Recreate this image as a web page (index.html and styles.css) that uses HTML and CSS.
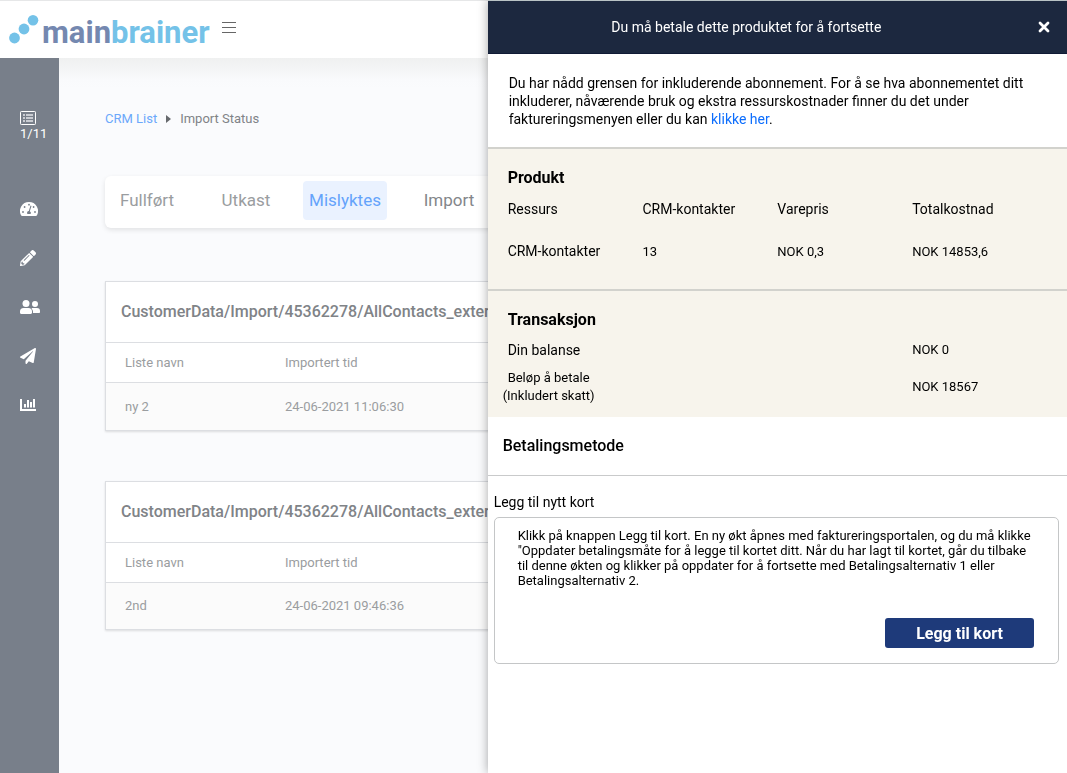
FILE: index.html
```html
<!DOCTYPE html>
<html lang="no">
<head>
<meta charset="utf-8">
<meta name="viewport" content="width=device-width, initial-scale=1">
<title>Mainbrainer – Import Status</title>
<link rel="stylesheet" href="styles.css">
</head>
<body>
<div class="app">
  <header class="topbar">
    <a class="logo" href="#">
      <svg class="logo-mark" viewBox="0 0 30 30" width="30" height="30" aria-hidden="true"><circle cx="5.500" cy="23" r="5.400"/><circle cx="15" cy="14" r="5.400"/><circle cx="24" cy="5.300" r="5.300"/></svg>
      <span class="logo-text"><span class="logo-main">main</span>brainer</span>
    </a>
    <button class="menu-btn" type="button" aria-label="Menu">
      <svg viewBox="0 0 14 12" width="14" height="12" aria-hidden="true"><path d="M0 .5h14M0 5.500h14M0 10.500h14" stroke="#666" fill="none"/></svg>
    </button>
  </header>
  <nav class="sidebar" aria-label="Main">
    <a class="side-link side-steps" href="#">
      <svg viewBox="0 0 16 14" width="16" height="14" aria-hidden="true"><rect x=".5" y=".5" width="15" height="13" rx=".8" fill="none" stroke="#fff"/><path d="M3 4h2M6 4h7M3 7h2M6 7h7M3 10h2M6 10h7" stroke="#e4e6ea" stroke-width="1.600" fill="none"/></svg>
      <span>1/11</span>
    </a>
    <a class="side-link" href="#" aria-label="Dashboard">
      <svg viewBox="0 0 18 14" width="18" height="14"><path fill="#fff" d="M9 0a9 9 0 0 0-7.800 13.500c.2.300.5.500.8.500h14c.3 0 .6-.2.800-.5A9 9 0 0 0 9 0z"/><g fill="#787f8a"><circle cx="9" cy="2.700" r=".9"/><circle cx="4.600" cy="5" r=".9"/><circle cx="13.600" cy="5" r=".9"/><circle cx="3" cy="10" r=".9"/><circle cx="15" cy="10" r=".9"/><path d="M10.500 3.600l1 .3-1.700 5.300a2 2 0 0 1 .8 2.800H7.400a2 2 0 0 1 1.400-3.100z"/></g></svg>
    </a>
    <a class="side-link" href="#" aria-label="Edit">
      <svg viewBox="0 0 512 512" width="16" height="16"><path fill="#fff" d="M498 142l-46 46c-5 5-13 5-17 0L324 77c-5-5-5-12 0-17l46-46c19-19 49-19 68 0l60 60c19 19 19 49 0 68zm-214-42L22 362 0 484c-3 16 12 30 28 28l122-22 262-262c5-5 5-13 0-17L301 100c-4-5-12-5-17 0zM124 340c-5-6-5-14 0-20l154-154c6-5 14-5 20 0s5 14 0 20L144 340c-6 5-14 5-20 0zm-36 84h48v36l-64 12-32-31 12-65h36v48z"/></svg>
    </a>
    <a class="side-link" href="#" aria-label="Contacts">
      <svg viewBox="0 0 20 14" width="20" height="14"><g fill="#fff"><circle cx="6" cy="3.500" r="3.500"/><circle cx="15" cy="4" r="3"/><path d="M3.600 8h4.800A3.600 3.600 0 0 1 12 11.600v1.200c0 .7-.5 1.200-1.200 1.200H1.200C.5 14 0 13.500 0 12.800v-1.200A3.600 3.600 0 0 1 3.600 8z"/><path d="M13 8h4a3 3 0 0 1 3 3v1c0 .6-.4 1-1 1h-6v-1.500A4.600 4.600 0 0 0 11.500 8.400c.4-.3 1-.4 1.500-.4z"/></g></svg>
    </a>
    <a class="side-link" href="#" aria-label="Send">
      <svg viewBox="0 0 512 512" width="16" height="16"><path fill="#fff" d="M476 3.200L12.500 270.600c-18.100 10.400-15.800 35.600 2.200 43.200L121 358.400l287.300-253.200c5.500-4.900 13.300 2.600 8.600 8.300L176 407v80.500c0 23.600 28.500 32.900 42.500 15.800L282 426l124.600 52.200c14.200 6 30.400-2.900 33-18.200l72-432C515 7.800 493.300-6.800 476 3.200z"/></svg>
    </a>
    <a class="side-link" href="#" aria-label="Reports">
      <svg viewBox="0 0 16 12" width="16" height="12"><path fill="#fff" d="M0 0h2v10h14v2H0zM4 5h2v3.500H4zM7 1h2v7.500H7zM10 3h2v5.500h-2zM13 0h2v8.500h-2z"/></svg>
    </a>
  </nav>
  <main class="content">
    <nav class="crumbs" aria-label="Breadcrumb">
      <a href="#">CRM List</a>
      <svg viewBox="0 0 5 8" width="5" height="8" aria-hidden="true"><path d="M0 0l5 4-5 4z" fill="#66696d"/></svg>
      <span>Import Status</span>
    </nav>
    <div class="tabs">
      <button class="tab" type="button">Fullført</button>
      <button class="tab" type="button">Utkast</button>
      <button class="tab tab-active" type="button">Mislyktes</button>
      <button class="tab tab-dark" type="button">Import</button>
    </div>
    <section class="card">
      <h2 class="card-title">CustomerData/Import/45362278/AllContacts_extern</h2>
      <table class="list">
        <thead><tr><th>Liste navn</th><th>Importert tid</th></tr></thead>
        <tbody><tr><td>ny 2</td><td>24-06-2021 11:06:30</td></tr></tbody>
      </table>
    </section>
    <section class="card">
      <h2 class="card-title">CustomerData/Import/45362278/AllContacts_extern</h2>
      <table class="list">
        <thead><tr><th>Liste navn</th><th>Importert tid</th></tr></thead>
        <tbody><tr><td>2nd</td><td>24-06-2021 09:46:36</td></tr></tbody>
      </table>
    </section>
  </main>
</div>

<aside class="drawer" role="dialog" aria-labelledby="drawer-title">
  <header class="drawer-head">
    <h1 class="drawer-title" id="drawer-title">Du må betale dette produktet for å fortsette</h1>
    <button class="close-btn" type="button" aria-label="Lukk">
      <svg viewBox="0 0 12 12" width="12" height="12" aria-hidden="true"><path d="M2 2l8 8M10 2l-8 8" stroke="#fff" stroke-width="2.800" stroke-linecap="round"/></svg>
    </button>
  </header>
  <p class="notice">Du har nådd grensen for inkluderende abonnement. For å se hva abonnementet ditt inkluderer, nåværende bruk og ekstra ressurskostnader finner du det under faktureringsmenyen eller du kan <a href="#">klikke her</a>.</p>
  <section class="panel panel-product">
    <h2 class="panel-title">Produkt</h2>
    <table class="costs">
      <thead><tr><th>Ressurs</th><th>CRM-kontakter</th><th>Varepris</th><th>Totalkostnad</th></tr></thead>
      <tbody><tr><td class="name">CRM-kontakter</td><td>13</td><td>NOK 0,3</td><td>NOK 14853,6</td></tr></tbody>
    </table>
  </section>
  <section class="panel panel-transaction">
    <h2 class="panel-title">Transaksjon</h2>
    <dl class="totals">
      <dt>Din balanse</dt><dd>NOK 0</dd>
      <dt class="due">Beløp å betale<br>(Inkludert skatt)</dt><dd>NOK 18567</dd>
    </dl>
  </section>
  <h2 class="method-title">Betalingsmetode</h2>
  <section class="new-card">
    <h3 class="new-card-title">Legg til nytt kort</h3>
    <div class="new-card-box">
      <p>Klikk på knappen Legg til kort. En ny økt åpnes med faktureringsportalen, og du må klikke "Oppdater betalingsmåte for å legge til kortet ditt. Når du har lagt til kortet, går du tilbake til denne økten og klikker på oppdater for å fortsette med Betalingsalternativ 1 eller Betalingsalternativ 2.</p>
      <button class="add-btn" type="button">Legg til kort</button>
    </div>
  </section>
</aside>
</body>
</html>
```
FILE: styles.css
```css
* { box-sizing: border-box; }

body {
  margin: 0;
  font-family: Roboto, "Liberation Sans", sans-serif;
  font-size: 14px;
  color: #000;
  background: #fafbfd;
  overflow: hidden;
}

h1, h2, h3, p, dl, dd { margin: 0; }
a { text-decoration: none; }
button { font: inherit; border: 0; padding: 0; background: none; cursor: pointer; }
svg { display: block; }

.app {
  display: grid;
  grid-template: 58px 1fr / 59px minmax(0, 1fr);
  min-height: 100vh;
}

.topbar {
  grid-column: 1 / -1;
  display: flex;
  gap: 12px;
  padding-left: 9px;
  background: #fff;
  border-top: 1px solid #e6e7e8;
}

.logo { display: flex; gap: 3px; }
.logo-mark { margin-top: 14px; fill: #74c2e8; }
.logo-text {
  padding-top: 14px;
  font-size: 31px;
  line-height: 36px;
  font-weight: 700;
  color: #74c2e8;
}
.logo-main { color: #7488b0; }
.menu-btn { align-self: flex-start; margin-top: 21px; }

.sidebar {
  display: flex;
  flex-direction: column;
  padding: 53px 0 0 20px;
  background: #787f8a;
}
.side-link {
  display: flex;
  align-items: center;
  height: 49px;
  color: #fff;
}
.side-steps {
  flex-direction: column;
  align-items: flex-start;
  gap: 1px;
  height: 73px;
  font-size: 13px;
  line-height: 16px;
}

.content {
  padding: 52px 0 0 46px;
  background: linear-gradient(#eff0f0, #f9fafc 22px, #fafbfd 30px);
}

.crumbs {
  display: flex;
  align-items: center;
  gap: 9px;
  font-size: 13px;
  line-height: 18px;
  color: #808387;
}
.crumbs a { color: #6ba8fb; }

.tabs {
  display: grid;
  grid-template-columns: 84px 114px 84px 124px;
  height: 52px;
  margin-top: 48px;
  padding: 5px 0 8px;
  background: #fff;
  border-radius: 6px;
  box-shadow: 0 2px 5px rgba(0, 0, 0, .1);
}
.tab {
  border-radius: 4px;
  font-size: 17px;
  line-height: 39px;
  color: #9a9da0;
}
.tab-active { color: #64a3fb; background: #eaf2ff; }
.tab-dark { color: #83868a; }

.card {
  margin-top: 50px;
  background: #fff;
  border: 1px solid #dcdee2;
  box-shadow: 0 1px 2px rgba(0, 0, 0, .12);
}
.tabs + .card { margin-top: 53px; }
.card-title {
  padding-left: 15px;
  font-size: 16px;
  line-height: 60px;
  font-weight: 500;
  color: #808387;
  white-space: nowrap;
}
.list {
  width: 100%;
  table-layout: fixed;
  border-collapse: collapse;
  font-size: 13px;
  text-align: left;
  color: #9a9da0;
}
.list th, .list td { padding: 0 0 0 19px; border-top: 1px solid #dcdee2; font-weight: 400; }
.list th:first-child { width: 160px; }
.list th { height: 40px; }
.list td { height: 47px; background: #fbfbfb; }

.drawer {
  position: fixed;
  top: 0;
  right: 0;
  bottom: 0;
  width: 54.3%;
  overflow-y: auto;
  background: #fff;
  border-top: 1px solid #b9c3c5;
  box-shadow: 0 0 10px rgba(0, 0, 0, .35);
}
.drawer-head {
  display: flex;
  align-items: center;
  padding-right: 17px;
  background: #1c283f;
  border-bottom: 1px solid #101a35;
}
.drawer-title {
  flex: 1;
  font-size: 14px;
  line-height: 52px;
  font-weight: 400;
  text-align: center;
  color: #fff;
}
.close-btn {
  display: flex;
  justify-content: flex-end;
  width: 45px;
}
.notice {
  padding: 20px 35px 19px 21px;
  line-height: 18px;
}
.notice a { color: #0d6efd; }

.panel {
  padding: 0 20px;
  background: #f7f4ec;
  border-top: 2px solid #d2d2cd;
}
.panel-title {
  padding-top: 18px;
  font-size: 16px;
  line-height: 21px;
  font-weight: 700;
}
.panel-product { padding-bottom: 17px; }
.panel-transaction { padding-bottom: 12px; }

.costs {
  width: 100%;
  table-layout: fixed;
  border-collapse: collapse;
  text-align: left;
}
.costs th, .costs td { height: 42px; padding: 0; font-weight: 400; }
.costs th:nth-child(-n+3) { width: 25%; }
.costs td { font-size: 13px; }
.costs .name { font-size: 14px; }

.totals {
  display: grid;
  grid-template-columns: 3fr 1fr;
  align-items: center;
  gap: 10px 0;
  padding-top: 11px;
  line-height: 18px;
}
.totals dd { font-size: 13px; }
.totals .due {
  justify-self: start;
  margin-left: -5px;
  font-size: 13px;
  text-align: center;
}

.method-title {
  padding-left: 15px;
  font-size: 16px;
  line-height: 58px;
  font-weight: 500;
  border-bottom: 1px solid #c9cacb;
}
.new-card { padding: 17px 8px 16px 6px; }
.new-card-title { font-size: 14px; line-height: 18px; font-weight: 400; }
.new-card-box {
  display: flex;
  flex-direction: column;
  gap: 30px;
  margin-top: 6px;
  padding: 10px 24px 15px 23px;
  border: 1px solid #c4c6c7;
  border-radius: 5px;
}
.new-card-box p { font-size: 13px; line-height: 15px; }
.add-btn {
  align-self: flex-end;
  width: 149px;
  height: 30px;
  border-radius: 3px;
  font-size: 16px;
  font-weight: 700;
  color: #fff;
  background: #1e3a7a;
}
```
